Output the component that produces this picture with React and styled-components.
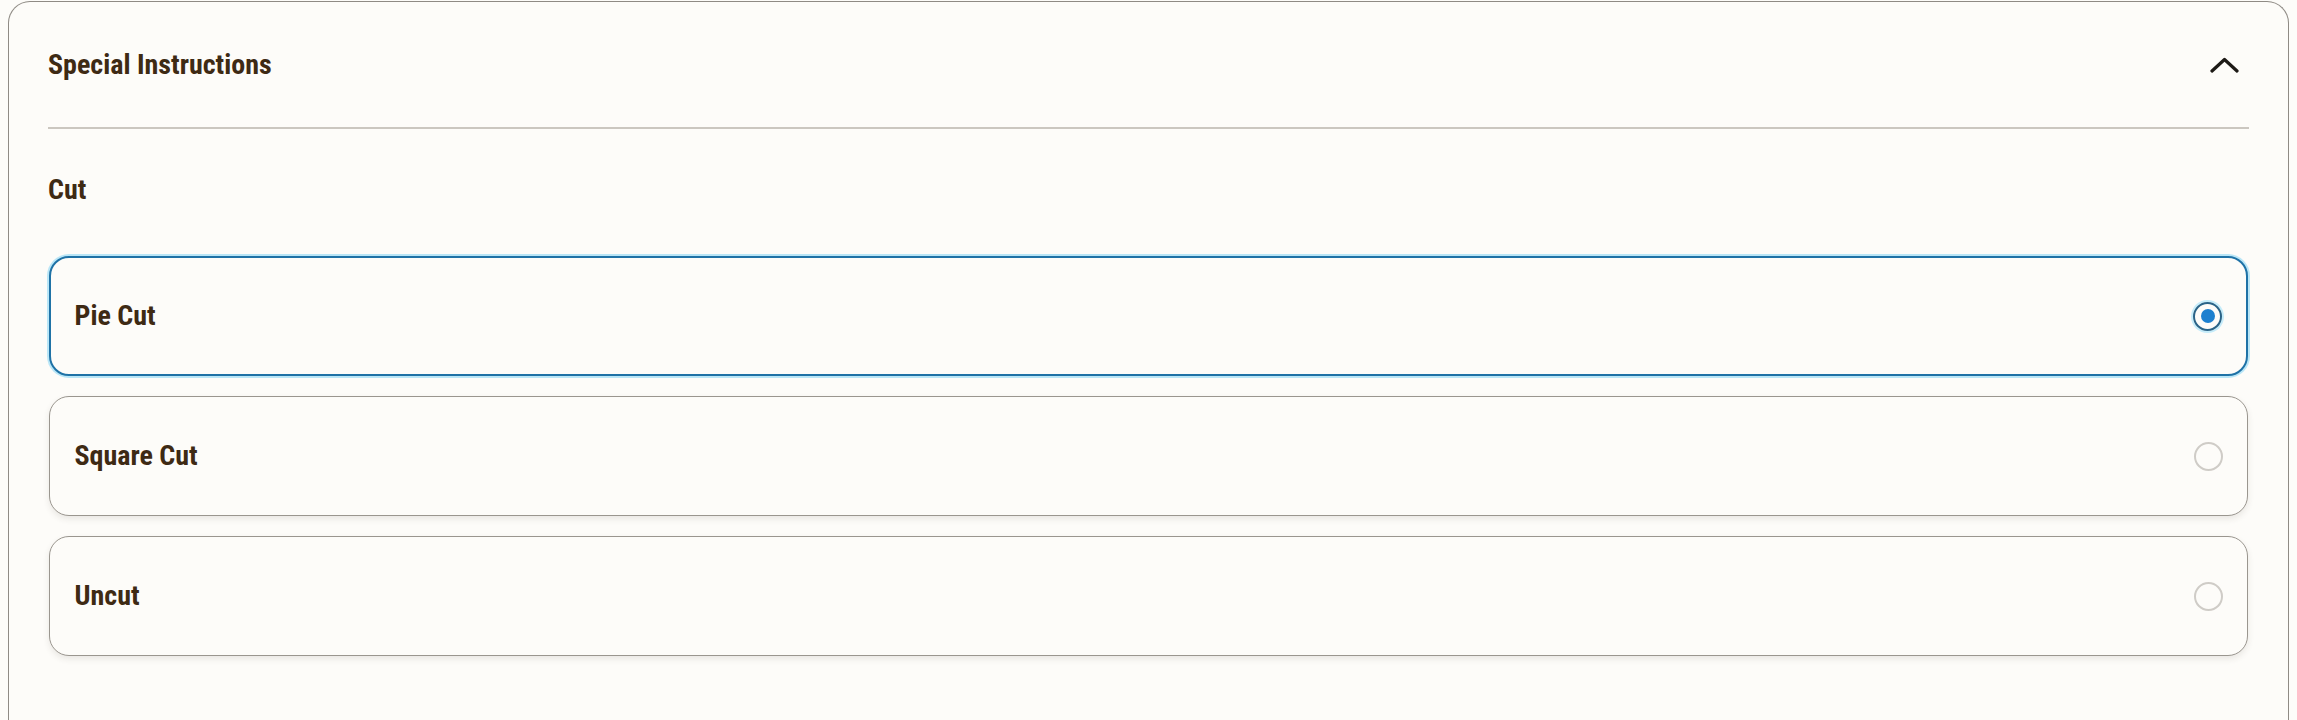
import React, { useState } from "react";
import styled, { createGlobalStyle } from "styled-components";

const GlobalStyle = createGlobalStyle`
  body {
    margin: 0;
    background: #fdfcf9;
    font-family: "Liberation Sans Narrow", "Roboto Condensed", "DejaVu Sans Condensed", "Liberation Sans", sans-serif;
    color: #3e2a14;
  }
`;

const Page = styled.div`
  padding: 1px 8px 0;
`;

const Card = styled.section`
  border: 1.5px solid #8f8b85;
  border-bottom: none;
  border-radius: 22px 22px 0 0;
  background: #fdfcf9;
  padding: 0 39px 64px;
`;

const Header = styled.div`
  height: 125px;
  display: flex;
  align-items: center;
  justify-content: space-between;
  border-bottom: 2px solid #cbc7c0;
`;

const Title = styled.h2`
  margin: 0;
  font-size: 28px;
  font-weight: 700;
  line-height: 32px;
`;

const Toggle = styled.button`
  border: none;
  background: transparent;
  padding: 0;
  margin-right: 10px;
  display: flex;
  align-items: center;
  color: #1d1a16;
  cursor: pointer;
`;

const Label = styled.div`
  margin-top: 45px;
  font-size: 28px;
  font-weight: 700;
  line-height: 32px;
`;

const Options = styled.div`
  margin-top: 50px;
  padding: 0 1px;
  display: flex;
  flex-direction: column;
  gap: 20px;
`;

const Option = styled.label`
  height: 120px;
  box-sizing: border-box;
  display: flex;
  align-items: center;
  justify-content: space-between;
  padding: 0 24px;
  border-radius: 20px;
  background: #fdfcf9;
  cursor: pointer;
  border: ${(p) => (p.selected ? "2.5px solid #1f72a6" : "1.5px solid #9a968f")};
  box-shadow: ${(p) =>
    p.selected
      ? "0 0 0 2px rgba(140, 215, 245, 0.6)"
      : "0 3px 6px rgba(60, 50, 40, 0.10)"};
  padding-left: ${(p) => (p.selected ? "23.5px" : "24.5px")};
`;

const OptionText = styled.span`
  font-size: 28px;
  font-weight: 700;
  line-height: 32px;
`;

const Radio = styled.span`
  width: 29px;
  height: 29px;
  box-sizing: border-box;
  border-radius: 50%;
  display: flex;
  align-items: center;
  justify-content: center;
  border: ${(p) => (p.checked ? "2.5px solid #2a6488" : "2px solid #cfccc7")};
  box-shadow: ${(p) => (p.checked ? "0 0 0 2px rgba(160, 225, 250, 0.6)" : "none")};

  &::after {
    content: "";
    width: 14px;
    height: 14px;
    border-radius: 50%;
    background: ${(p) => (p.checked ? "#1d80cf" : "transparent")};
  }
`;

const cuts = ["Pie Cut", "Square Cut", "Uncut"];

export default function App() {
  const [cut, setCut] = useState("Pie Cut");

  return (
    <Page>
      <GlobalStyle />
      <Card>
        <Header>
          <Title>Special Instructions</Title>
          <Toggle aria-label="Collapse">
            <svg width="29" height="16" viewBox="0 0 29 16" fill="none">
              <polyline
                points="2,14 14.5,2.5 27,14"
                stroke="currentColor"
                strokeWidth="3.2"
                strokeLinecap="round"
                strokeLinejoin="round"
              />
            </svg>
          </Toggle>
        </Header>
        <Label>Cut</Label>
        <Options>
          {cuts.map((c) => (
            <Option key={c} selected={c === cut} onClick={() => setCut(c)}>
              <OptionText>{c}</OptionText>
              <Radio checked={c === cut} />
            </Option>
          ))}
        </Options>
      </Card>
    </Page>
  );
}
